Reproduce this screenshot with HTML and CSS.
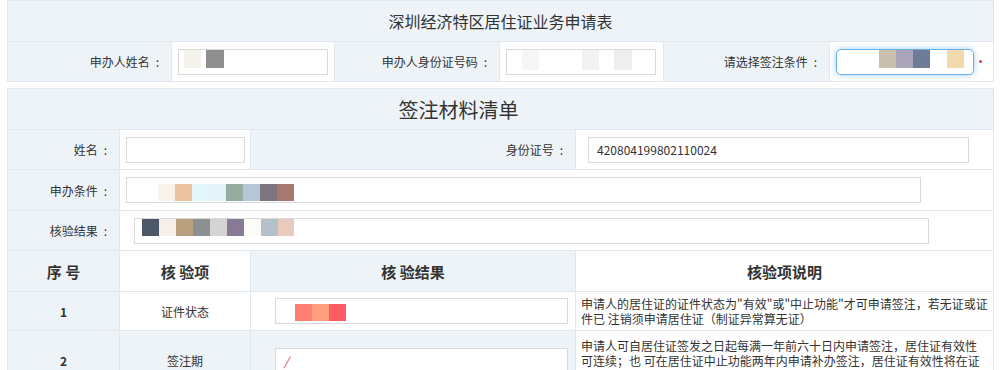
FILE: index.html
```html
<!DOCTYPE html>
<html lang="zh-CN">
<head>
    <meta charset="UTF-8">
    <title>深圳经济特区居住证业务申请表</title>
    <link rel="stylesheet" href="styles.css">
</head>
<body>
    <div class="page">
        <table class="sheet apply">
            <colgroup>
                <col class="c164"><col class="c163"><col class="c165"><col class="c164"><col class="c166"><col class="c164">
            </colgroup>
            <tr class="r40">
                <td colspan="6" class="bg title">深圳经济特区居住证业务申请表</td>
            </tr>
            <tr class="r39">
                <td class="bg label">申办人姓名<span class="colon">:</span></td>
                <td><div class="field w150 mosaic-name"></div></td>
                <td class="bg label">申办人身份证号码<span class="colon">:</span></td>
                <td><div class="field w150 mosaic-faint"></div></td>
                <td class="bg label">请选择签注条件<span class="colon">:</span></td>
                <td>
                    <div class="pick">
                        <div class="field select mosaic-select"></div>
                        <span class="required"></span>
                    </div>
                </td>
            </tr>
        </table>

        <table class="sheet list">
            <colgroup>
                <col class="c112"><col class="c131"><col class="c325"><col class="c418">
            </colgroup>
            <tr class="r40">
                <td colspan="4" class="bg title big"><span class="shift">签注材料清单</span></td>
            </tr>
            <tr class="r39">
                <td class="bg label">姓名<span class="colon">:</span></td>
                <td><div class="field w119"></div></td>
                <td class="bg label">身份证号<span class="colon">:</span></td>
                <td><div class="field w381 id">420804199802110024</div></td>
            </tr>
            <tr class="r40">
                <td class="bg label">申办条件<span class="colon">:</span></td>
                <td colspan="3"><div class="field wide mosaic-cond"></div></td>
            </tr>
            <tr class="r39">
                <td class="bg label">核验结果<span class="colon">:</span></td>
                <td colspan="3"><div class="field wide off mosaic-check"></div></td>
            </tr>
            <tr class="head r40">
                <td class="bg">序 号</td>
                <td>核 验项</td>
                <td class="bg">核 验结果</td>
                <td>核验项说明</td>
            </tr>
            <tr class="r38">
                <td class="bg num">1</td>
                <td class="center">证件状态</td>
                <td><div class="field result mosaic-state"></div></td>
                <td class="desc">申请人的居住证的证件状态为"有效"或"中止功能"才可申请签注，若无证或证件已 注销须申请居住证（制证异常算无证）</td>
            </tr>
            <tr class="r38">
                <td class="bg num">2</td>
                <td class="bg center">签注期</td>
                <td class="bg"><div class="field result"><span class="slash">/</span></div></td>
                <td class="desc loose">申请人可自居住证签发之日起每满一年前六十日内申请签注，居住证有效性可连续；也 可在居住证中止功能两年内申请补办签注，居住证有效性将在证件中止功能期间中断</td>
            </tr>
        </table>
    </div>
</body>
</html>
```

FILE: styles.css
```css
body {
    margin: 0;
    font-family: "Noto Sans CJK SC", "Noto Sans", sans-serif;
    font-size: 12px;
    color: #333;
    background-color: #fff;
}
.page {
    padding: 0 7px;
}
.sheet {
    width: 986px;
    border-collapse: collapse;
    table-layout: fixed;
}
.sheet td {
    border: 1px solid #e2e8ef;
    padding: 0;
    background-color: #fff;
}
.sheet td.bg {
    background-color: #eef3f8;
}
.r40 td { height: 40px; }
.r39 td { height: 39px; }
.r38 td { height: 38px; }
.apply {
    margin-bottom: 6px;
}
.c164 { width: 164px; }
.c163 { width: 163px; }
.c165 { width: 165px; }
.c166 { width: 166px; }
.c112 { width: 112px; }
.c131 { width: 131px; }
.c325 { width: 325px; }
.c418 { width: 418px; }

.title {
    text-align: center;
    font-size: 16px;
    color: #333;
}
.title.big {
    font-size: 20px;
}
.shift {
    margin-right: 84px;
}
.sheet td.label {
    text-align: right;
    padding-right: 12px;
    white-space: nowrap;
}
.colon {
    margin-left: 6px;
}
.center {
    text-align: center;
}
.num {
    text-align: center;
    font-weight: bold;
}
.head td {
    text-align: center;
    font-size: 15px;
    font-weight: bold;
}

.field {
    box-sizing: border-box;
    height: 26px;
    line-height: 24px;
    border: 1px solid #d9d9d9;
    background-color: #fff;
    margin-left: 6px;
    padding-left: 8px;
    background-repeat: no-repeat;
}
.w150 { width: 150px; }
.w119 { width: 119px; }
.w381 { width: 381px; margin-left: 12px; }
.wide { width: 795px; }
.wide.off { margin-left: 14px; }
.result {
    width: 293px;
    margin-left: 24px;
}
.id {
    color: #333;
}
.slash {
    color: #d33;
    font-style: italic;
}

.pick {
    display: flex;
    align-items: center;
}
.select {
    width: 138px;
    border: 1px solid #66afe9;
    border-radius: 5px;
    box-shadow: 0 0 6px rgba(102, 175, 233, 0.6);
}
.required {
    width: 3px;
    height: 3px;
    border-radius: 50%;
    background-color: #e4393c;
    margin-left: 5px;
}

.sheet td.desc {
    height: auto;
    padding: 4px 5px;
    line-height: 15px;
    font-size: 12px;
    vertical-align: middle;
}
.sheet td.desc.loose {
    padding: 7px 5px;
}

/* blurred personal data */
.mosaic-name {
    background-image: linear-gradient(90deg, #f4f2ea 0 17px, #fff 17px 22px, #8f8f8f 22px 40px, transparent 40px);
    background-size: 40px 18px;
    background-position: 5px 0;
}
.mosaic-faint {
    background-image: linear-gradient(90deg, #f6f6f8 0 17px, #fff 17px 60px, #f4f2f0 60px 77px, #fff 77px 92px, #efedef 92px 110px, transparent 110px);
    background-size: 110px 20px;
    background-position: 15px 0;
}
.mosaic-select {
    background-image: linear-gradient(90deg, #fff 0 40px, #c9bfae 40px 57px, #aaa5b9 57px 74px, #6e7d97 74px 91px, #fff 91px 108px, #f1dbac 108px 125px, transparent 125px);
    background-size: 125px 18px;
    background-position: 2px 0;
}
.mosaic-cond {
    background-image: linear-gradient(90deg, #faf3ec 0 17px, #ecc3a0 17px 34px, #e3f6fb 34px 51px, #e5f3f9 51px 68px, #94ad9e 68px 85px, #b6c5d8 85px 102px, #7b7580 102px 119px, #a6796e 119px 136px, transparent 136px);
    background-size: 136px 17px;
    background-position: 31px 6px;
}
.mosaic-check {
    background-image: linear-gradient(90deg, #4c5866 0 17px, #f5efe9 17px 34px, #b9a07e 34px 51px, #8c9091 51px 68px, #d4d4d4 68px 85px, #877a95 85px 102px, #fbfbf7 102px 119px, #b5c1c9 119px 136px, #e8cbbd 136px 152px, transparent 152px);
    background-size: 152px 17px;
    background-position: 7px 0;
}
.mosaic-state {
    background-image: linear-gradient(90deg, #ff7e72 0 17px, #ffa07f 17px 34px, #fe5b65 34px 51px, transparent 51px);
    background-size: 51px 17px;
    background-position: 19px 5px;
}
```
